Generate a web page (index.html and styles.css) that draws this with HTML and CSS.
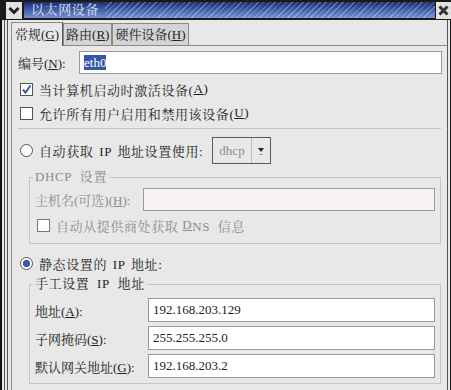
FILE: index.html
```html
<!DOCTYPE html>
<html lang="zh-CN">
<head>
    <meta charset="UTF-8">
    <meta name="viewport" content="width=device-width, initial-scale=1.0">
    <title>以太网设备</title>
    <link rel="stylesheet" href="styles.css">
</head>
<body>
    <div class="window">
        <div class="titlebar">
            <span class="menu-btn">
                <svg width="16" height="17" viewBox="0 0 16 17"><path d="M3.5 6 L8 10.5 L12.5 6" fill="none" stroke="#222" stroke-width="3"/></svg>
            </span>
            <div class="title">
                <span class="title-text">以太网设备</span>
                <span class="stripes"></span>
            </div>
            <span class="close-btn">
                <svg width="15" height="17" viewBox="0 0 15 17"><path d="M3.5 4.5 L11.5 12.5 M11.5 4.5 L3.5 12.5" fill="none" stroke="#333" stroke-width="3"/></svg>
            </span>
        </div>

        <div class="frame">
            <div class="tabs">
                <div class="tab active">常规(<u>G</u>)</div>
                <div class="tab">路由(<u>R</u>)</div>
                <div class="tab">硬件设备(<u>H</u>)</div>
            </div>

            <div class="page">
                <div class="field-row id-row">
                    <span class="label id-label">编号(<u>N</u>):</span>
                    <div class="entry"><span class="selected">eth0</span></div>
                </div>

                <div class="check-row first">
                    <span class="check">
                        <svg width="13" height="13" viewBox="0 0 13 13"><path d="M3 6.5 L5.5 9.5 L10.5 2.5" fill="none" stroke="#3a5a9e" stroke-width="2"/></svg>
                    </span>
                    当计算机启动时激活设备(<u>A</u>)
                </div>
                <div class="check-row">
                    <span class="check"></span>
                    允许所有用户启用和禁用该设备(<u>U</u>)
                </div>

                <div class="sep"></div>

                <div class="radio-row dhcp-row">
                    <span class="radio-label"><span class="radio"></span>自动获取 IP 地址设置使用:</span>
                    <span class="combo">
                        <span class="combo-text">dhcp</span>
                        <span class="combo-btn">
                            <svg width="8" height="10" viewBox="0 0 8 10"><path d="M1 2 L7 2 L4 6 Z" fill="#222"/><path d="M2 8.5 L6 8.5" stroke="#999" stroke-width="1"/></svg>
                        </span>
                    </span>
                </div>

                <fieldset class="group dhcp-group">
                    <legend>DHCP&nbsp; 设置</legend>
                    <div class="field-row host-row">
                        <span class="label host-label">主机名(可选)(<u>H</u>):</span>
                        <div class="entry disabled"></div>
                    </div>
                    <div class="check-row dns-row">
                        <span class="check"></span>
                        自动从提供商处获取&nbsp; <u>D</u>NS&nbsp; 信息
                    </div>
                </fieldset>

                <div class="radio-row static-row">
                    <span class="radio on"></span>静态设置的 IP 地址:
                </div>

                <fieldset class="group static-group">
                    <legend>手工设置&nbsp; IP&nbsp; 地址</legend>
                    <div class="field-row ip-row">
                        <span class="label ip-label">地址(<u>A</u>):</span>
                        <div class="entry">192.168.203.129</div>
                    </div>
                    <div class="field-row ip-row">
                        <span class="label ip-label">子网掩码(<u>S</u>):</span>
                        <div class="entry">255.255.255.0</div>
                    </div>
                    <div class="field-row ip-row">
                        <span class="label ip-label">默认网关地址(<u>G</u>):</span>
                        <div class="entry">192.168.203.2</div>
                    </div>
                </fieldset>
            </div>
        </div>
    </div>
</body>
</html>
```

FILE: styles.css
```css
body {
    margin: 0;
    font-family: 'Liberation Serif', 'Noto Serif CJK SC', 'Noto Sans CJK SC', serif;
    font-size: 13px;
    letter-spacing: 0.6px;
    color: #1e1e1e;
    background-color: #e8e8e8;
}

.window {
    width: 451px;
    height: 390px;
    overflow: hidden;
    background-color: #e8e8e8;
}

/* title bar */
.titlebar {
    display: flex;
    height: 20px;
    box-sizing: border-box;
    padding-top: 2px;
    background-color: #1a1a1a;
}

.menu-btn {
    width: 16px;
    height: 17px;
    margin-left: 6px;
    background-color: #e2e2e2;
}

.title {
    flex: 1;
    display: flex;
    height: 16px;
    margin-left: 2px;
    background: linear-gradient(to bottom, #1d2c6a 0%, #3d5aa6 45%, #7690d0 100%);
}

.title-text {
    padding: 0 6px 0 7px;
    line-height: 16px;
    color: #dfe3f4;
}

.stripes {
    flex: 1;
    background: repeating-linear-gradient(135deg, rgba(255, 255, 255, 0.28) 0 1px, transparent 1px 4px);
}

.close-btn {
    width: 15px;
    height: 17px;
    margin-left: 1px;
    background-color: #e2e2e2;
}

/* window frame */
.frame {
    height: 370px;
    padding: 1px 3px 0 11px;
    box-shadow:
        inset 2px 0 #141414,
        inset 4px 0 #e8e8e8,
        inset 5px 0 #555,
        inset 7px 0 #e8e8e8,
        inset 8px 0 #555,
        inset -1px 0 #141414,
        inset -3px 0 #e8e8e8,
        inset -4px 0 #555;
}

/* tabs */
.tabs {
    display: flex;
    align-items: flex-end;
    height: 24px;
}

.tab {
    height: 21px;
    line-height: 21px;
    padding: 0 2px;
    border: 1px solid #8a8a8a;
    border-bottom: none;
    background-color: #d4d4d4;
    color: #222;
    letter-spacing: 0;
    white-space: nowrap;
}

.tab.active {
    height: 23px;
    line-height: 24px;
    padding: 0 3px;
    margin-bottom: -1px;
    position: relative;
    background-color: #e8e8e8;
    border-right-color: #555;
}

/* page */
.page {
    height: 360px;
    padding: 0 5px 0 6px;
    border: 1px solid #8a8a8a;
    border-right-color: #555;
    background-color: #e8e8e8;
}

.field-row {
    display: flex;
    align-items: center;
}

.label {
    flex: none;
    letter-spacing: 0;
    white-space: nowrap;
}

.entry {
    flex: 1;
    box-sizing: border-box;
    height: 100%;
    padding-left: 4px;
    border: 1px solid #999;
    background-color: #fff;
    display: flex;
    align-items: center;
    color: #222;
    letter-spacing: 0;
}

.entry.disabled {
    background-color: #f6f2f6;
}

.selected {
    background-color: #3656a4;
    color: #fff;
    line-height: 15px;
}

.id-row {
    height: 23px;
    margin-top: 5px;
}

.id-label {
    width: 61px;
}

.check-row {
    display: flex;
    align-items: center;
    height: 24px;
    white-space: nowrap;
}

.check-row.first {
    margin-top: 3px;
}

.check {
    flex: none;
    width: 13px;
    height: 13px;
    box-sizing: border-box;
    margin: 0 6px 0 2px;
    border: 1px solid #555;
    background-color: #fff;
    display: flex;
    align-items: center;
    justify-content: center;
}

.check svg {
    margin: -1px;
}

.sep {
    height: 1px;
    margin: 3px 1px 0 0;
    background-color: #c4c4c4;
}

.radio-row {
    display: flex;
    align-items: center;
    white-space: nowrap;
    word-spacing: 2px;
}

.dhcp-row {
    height: 27px;
    margin-top: 8px;
}

.radio-label {
    display: flex;
    align-items: center;
    width: 194px;
}

.radio {
    flex: none;
    width: 13px;
    height: 13px;
    box-sizing: border-box;
    margin: 0 6px 0 2px;
    border: 1px solid #555;
    border-radius: 50%;
    background-color: #fff;
}

.radio.on {
    background: radial-gradient(circle, #3b5aa8 0 3.4px, #fff 4px);
}

.combo {
    display: flex;
    height: 27px;
    width: 59px;
    box-sizing: border-box;
    border: 1px solid #5a5a5a;
    background-color: #e8e8e8;
    letter-spacing: 0;
    word-spacing: 0;
}

.combo-text {
    width: 38px;
    line-height: 25px;
    text-align: center;
    color: #8c8c8c;
    border-right: 1px solid #bdbdbd;
}

.combo-btn {
    flex: 1;
    display: flex;
    align-items: center;
    justify-content: center;
}

/* frames */
.group {
    margin: 5px 1px 0 11px;
    padding: 0 5px 7px 5px;
    border: 1px solid #c6c6c6;
    min-width: 0;
}

.group legend {
    padding: 0 2px;
    margin-left: -2px;
    line-height: 16px;
    white-space: nowrap;
}

.dhcp-group {
    color: #8c8c8c;
}

.dhcp-group .check {
    border-color: #777;
}

.host-row {
    height: 23px;
    margin-top: 3px;
}

.host-label {
    width: 108px;
}

.dns-row {
    height: 22px;
    margin-top: 3px;
}

.static-row {
    height: 22px;
    margin-top: 8px;
}

.static-group {
    margin-top: 2px;
    padding-bottom: 5px;
}

.ip-row {
    height: 24px;
    margin-top: 4px;
}

.ip-row:first-of-type {
    margin-top: 6px;
}

.ip-label {
    width: 113px;
}
```
